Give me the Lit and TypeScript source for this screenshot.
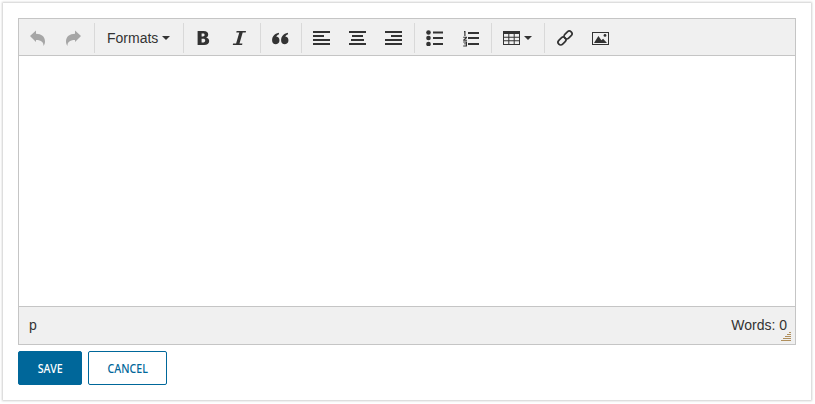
import { LitElement, html, css, svg } from "lit";
import { customElement } from "lit/decorators.js";

const ic = (w: number, h: number, body: unknown) =>
  html`<svg width=${w} height=${h} viewBox="0 0 ${w} ${h}">${body}</svg>`;

const undo = ic(18, 18, svg`<path d="M1 7 7 1.500v3.300c5.300 0 9 2.800 9 7.700 0 1.900-.6 3.400-1.500 4.500.2-3.500-2-6-7.500-6V13z"/>`);
const redo = ic(18, 18, svg`<path d="M16 7 10 1.500v3.300c-5.300 0-9 2.800-9 7.700 0 1.900.6 3.400 1.500 4.500-.2-3.500 2-6 7.500-6V13z"/>`);
const bold = ic(14, 16, svg`<path fill-rule="evenodd" d="M1.600 1h6c3 0 4.600 1.300 4.600 3.500 0 1.600-.8 2.600-2.200 3.100 2 .3 3.200 1.600 3.200 3.500C13.200 13.700 11.200 15 8.100 15H1.600zM5.600 3.600v2.800h1.300c1.100 0 1.700-.5 1.700-1.400s-.6-1.400-1.700-1.400zM5.600 8.800v3.600h1.700c1.300 0 1.900-.6 1.900-1.800s-.7-1.800-2-1.800z"/>`);
const italic = ic(14, 16, svg`<path d="M4.600 1H14l-.3 1.400h-3L7.500 13.600h2.900L10.100 15H.8l.3-1.400h3L7.300 2.400H4.300z"/>`);
const quote = ic(18, 14, svg`<path d="M5 13.200a3.900 3.900 0 0 1-3.900-3.900C1.100 5.500 3.500 2.800 7.800 1.800l.3 1.400C6.300 4 5.500 4.900 5.300 5.500a3.900 3.900 0 0 1-.3 7.700zM14 13.200a3.900 3.900 0 0 1-3.900-3.900c0-3.800 2.400-6.500 6.700-7.500l.3 1.400c-1.800.8-2.600 1.700-2.800 2.300a3.900 3.900 0 0 1-.3 7.700z"/>`);
const lines = (rows: [number, number][]) =>
  ic(18, 16, rows.map(([x, w], i) => svg`<rect x=${x} y=${1 + i * 4} width=${w} height="2"/>`));
const alignL = lines([[1, 17], [1, 11], [1, 17], [1, 17]]);
const alignC = lines([[1, 17], [4, 11], [3, 13], [1, 17]]);
const alignR = lines([[1, 17], [7, 11], [1, 17], [1, 17]]);
const bullets = ic(18, 16, svg`
  <circle cx="3.500" cy="2.500" r="2.300"/><circle cx="3.500" cy="8" r="2.300"/><circle cx="3.500" cy="14" r="2.300"/>
  <rect x="8" y="1.500" width="10" height="2"/><rect x="8" y="7" width="10" height="2"/><rect x="8" y="13" width="10" height="2"/>`);
const numbered = ic(18, 18, svg`
  <rect x="7" y="3" width="11" height="2"/><rect x="7" y="8" width="11" height="2"/><rect x="7" y="14" width="11" height="2"/>
  <path d="M3 2h1.500v5H3.300V3.200H3zM2.200 7.800H6v1.100L4 10.800h2v1H2.200v-1L4.400 8.800H2.200zM2.200 12.400H6v5H2.200v-1h2.600v-1.100H3v-.9h1.800v-1H2.200z"/>`);
const table = ic(18, 16, svg`<path fill-rule="evenodd" d="M1 1h17v14H1zM2 4v2.700h4.300V4zm5.300 0v2.700h4.400V4zm5.400 0v2.700H17V4zM2 7.700v2.600h4.300V7.700zm5.300 0v2.600h4.400V7.700zm5.400 0v2.600H17V7.700zM2 11.300V14h4.300v-2.700zm5.300 0V14h4.400v-2.700zm5.400 0V14H17v-2.700z"/>`);
const link = ic(18, 18, svg`<g fill="none" stroke="currentColor" stroke-width="1.700">
  <rect x="8.500" y="3.300" width="9" height="5.400" rx="2.700" transform="rotate(-45 13 6)"/>
  <rect x="2.500" y="9.300" width="9" height="5.400" rx="2.700" transform="rotate(-45 7 12)"/></g>`);
const image = ic(18, 16, svg`<path fill-rule="evenodd" d="M1 2h17v13H1zM2 3v11h15V3z"/><path d="M3 13 7.400 6l3 4.300 1.700-1.500L16 13z"/><circle cx="14" cy="5.400" r="1.400"/>`);

@customElement("app-root")
export class AppRoot extends LitElement {
  static styles = css`
    :host {
      display: block;
      width: 815px;
      height: 404px;
      box-sizing: border-box;
      padding: 3px 4px 4px 3px;
      background: #fff;
      font-family: "Liberation Sans", Arial, sans-serif;
    }
    .card {
      box-sizing: border-box;
      height: 397px;
      background: #fff;
      box-shadow: 0 0 2px 1px #cfcfcf;
      padding: 15px 15px 0 15px;
      display: flex;
      flex-direction: column;
      gap: 6px;
    }
    .editor {
      height: 327px;
      flex: none;
      box-sizing: border-box;
      border: 1px solid #c5c5c5;
      display: flex;
      flex-direction: column;
    }
    .toolbar {
      box-sizing: border-box;
      height: 37px;
      flex: none;
      background: #f0f0f0;
      border-bottom: 1px solid #c5c5c5;
      display: flex;
      align-items: stretch;
      padding: 4px 0 2px;
    }
    .group {
      display: flex;
      border-left: 1px solid #d9d9d9;
      padding: 0 3px 0 1px;
    }
    .group:first-child {
      border-left: none;
      padding: 0 2px 0 1px;
    }
    .btn {
      width: 36px;
      display: flex;
      align-items: center;
      justify-content: center;
      color: #333;
      fill: currentColor;
    }
    .btn.off {
      color: #a6a6a6;
    }
    .wide {
      box-sizing: border-box;
      width: 84px;
      padding-left: 11px;
      justify-content: flex-start;
      gap: 4px;
      font-size: 14px;
      color: #333;
    }
    .tbl {
      width: 48px;
      gap: 4px;
      justify-content: flex-start;
      padding-left: 9px;
      box-sizing: border-box;
    }
    .caret {
      width: 0;
      height: 0;
      border-left: 4px solid transparent;
      border-right: 4px solid transparent;
      border-top: 4px solid #333;
    }
    .body {
      flex: 1;
      background: #fff;
    }
    .status {
      box-sizing: border-box;
      height: 38px;
      flex: none;
      background: #f0f0f0;
      border-top: 1px solid #c5c5c5;
      display: flex;
      align-items: center;
      justify-content: space-between;
      padding: 0 8px 1px 10px;
      font-size: 14px;
      color: #333;
      position: relative;
    }
    .grip {
      position: absolute;
      right: 3px;
      bottom: 3px;
      display: block;
    }
    .actions {
      display: flex;
      gap: 6px;
    }
    .action {
      box-sizing: border-box;
      height: 34px;
      border-radius: 2px;
      border: 1px solid #00679a;
      display: flex;
      align-items: center;
      justify-content: center;
      font-family: "Noto Sans", sans-serif;
      font-size: 13px;
      font-weight: 500;
    }
    .action span {
      display: block;
      transform: scaleX(0.82);
    }
    .save {
      width: 64px;
      background: #00679a;
      color: #fff;
    }
    .cancel {
      width: 79px;
      background: #fff;
      color: #00679a;
    }
  `;

  private b(icon: unknown, off = false) {
    return html`<div class="btn ${off ? "off" : ""}">${icon}</div>`;
  }

  render() {
    return html`
      <div class="card">
        <div class="editor">
          <div class="toolbar">
            <div class="group">${this.b(undo, true)}${this.b(redo, true)}</div>
            <div class="group">
              <div class="btn wide">Formats<span class="caret"></span></div>
            </div>
            <div class="group">${this.b(bold)}${this.b(italic)}</div>
            <div class="group">${this.b(quote)}</div>
            <div class="group">${this.b(alignL)}${this.b(alignC)}${this.b(alignR)}</div>
            <div class="group">${this.b(bullets)}${this.b(numbered)}</div>
            <div class="group">
              <div class="btn tbl">${table}<span class="caret"></span></div>
            </div>
            <div class="group">${this.b(link)}${this.b(image)}</div>
          </div>
          <div class="body"></div>
          <div class="status">
            <span>p</span><span>Words: 0</span>
            <svg class="grip" width="11" height="10" viewBox="0 0 11 10">
              <g fill="#b08f5c">
                <rect x="8" y="1" width="2" height="1"/>
                <rect x="6" y="3" width="4" height="1"/>
                <rect x="4" y="5" width="6" height="1"/>
                <rect x="2" y="7" width="8" height="1"/>
                <rect x="0" y="9" width="10" height="1"/>
              </g>
            </svg>
          </div>
        </div>
        <div class="actions">
          <div class="action save"><span>SAVE</span></div>
          <div class="action cancel"><span>CANCEL</span></div>
        </div>
      </div>
    `;
  }
}
